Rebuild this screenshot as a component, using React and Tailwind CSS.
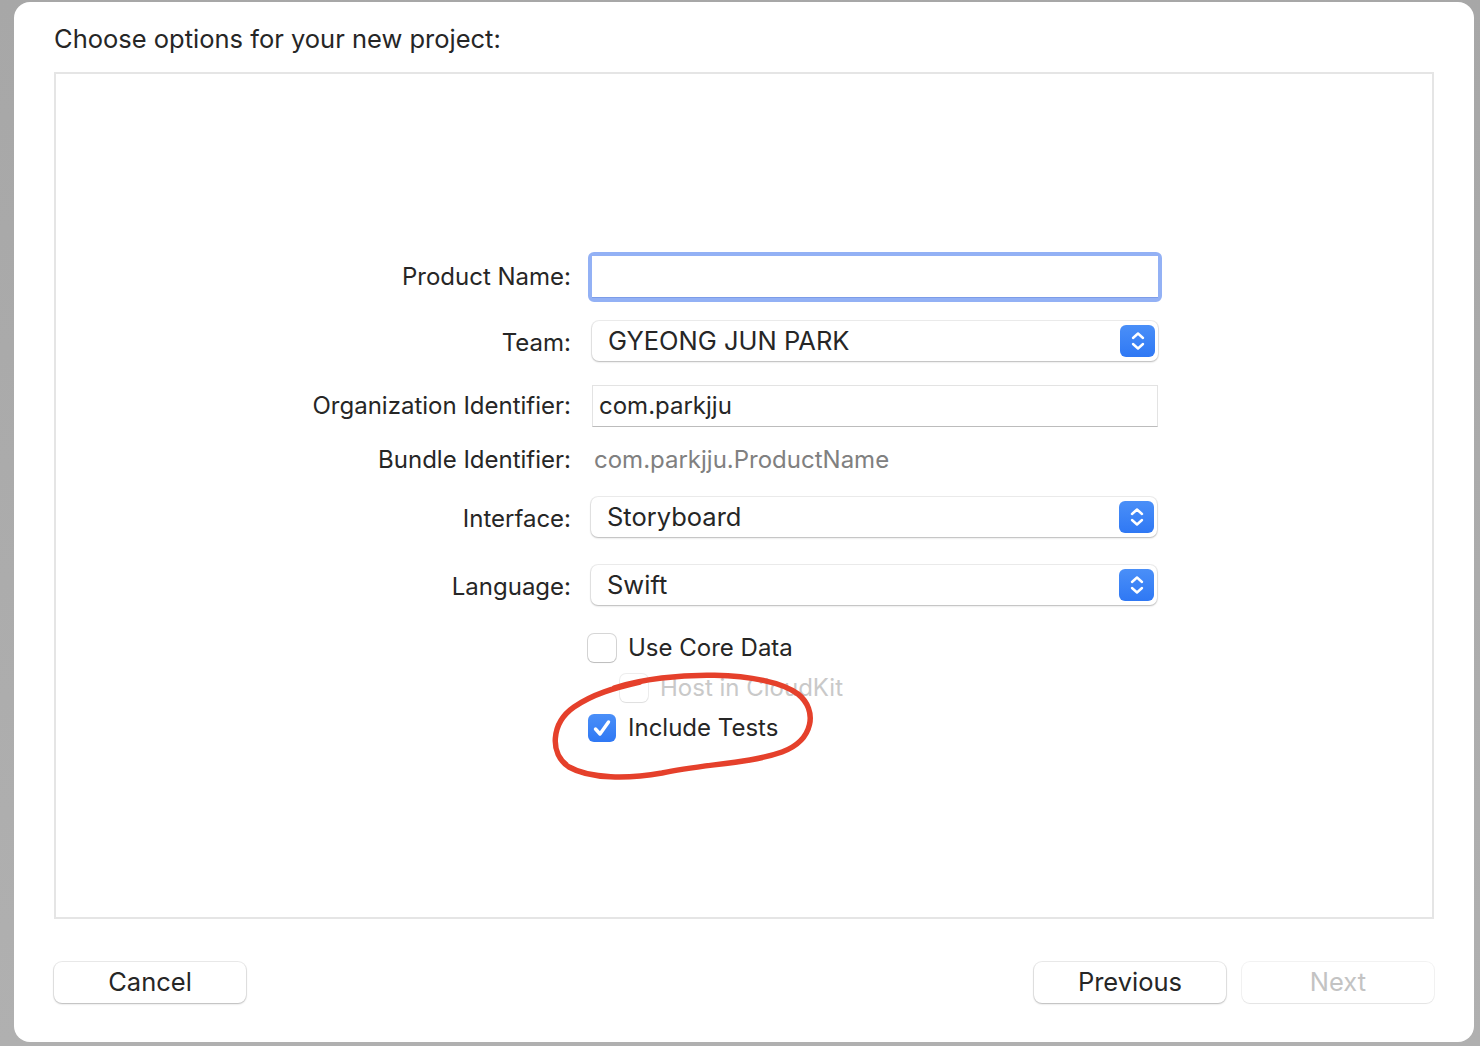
import React from "react";

const font = { fontFamily: "Inter, 'Liberation Sans', sans-serif" };

function Stepper() {
  return (
    <div className="w-[35px] h-[32px] rounded-[6px] bg-gradient-to-b from-[#4a8ff8] to-[#2f78f4] flex items-center justify-center">
      <svg width="16" height="22" viewBox="0 0 16 22" fill="none">
        <path d="M3 8 L8 3.5 L13 8" stroke="white" strokeWidth="2.4" strokeLinecap="round" strokeLinejoin="round" />
        <path d="M3 14 L8 18.5 L13 14" stroke="white" strokeWidth="2.4" strokeLinecap="round" strokeLinejoin="round" />
      </svg>
    </div>
  );
}

function Popup({ text }) {
  return (
    <div className="w-[566px] h-[40px] bg-white rounded-[7px] shadow-[0_0_0_1px_rgba(0,0,0,0.07),0_1px_2px_rgba(0,0,0,0.22)] flex items-center justify-between pl-[16px] pr-[3px]">
      <span className="text-[25.5px] text-[#262626]">{text}</span>
      <Stepper />
    </div>
  );
}

function Label({ children }) {
  return (
    <div className="w-[515px] text-right text-[24px] text-[#262626] shrink-0">{children}</div>
  );
}

function Checkbox({ checked, disabled }) {
  if (checked) {
    return (
      <div className="w-[28px] h-[28px] rounded-[6px] bg-gradient-to-b from-[#4a8ff8] to-[#2f78f4] flex items-center justify-center">
        <svg width="24" height="24" viewBox="0 0 24 24" fill="none">
          <path d="M5.5 13 L10 18 L18.5 6" stroke="white" strokeWidth="3.4" strokeLinecap="round" strokeLinejoin="round" />
        </svg>
      </div>
    );
  }
  return (
    <div
      className={`w-[28px] h-[28px] rounded-[6px] bg-white ${
        disabled
          ? "shadow-[0_0_0_1px_rgba(0,0,0,0.07),0_1px_1px_rgba(0,0,0,0.06)]"
          : "shadow-[0_0_0_1px_rgba(0,0,0,0.16),0_1px_1px_rgba(0,0,0,0.12)]"
      }`}
    />
  );
}

export default function App() {
  return (
    <div className="w-[1480px] h-[1046px] bg-gradient-to-b from-[#a7a7a7] to-[#b0b0b0] pt-[2px] pl-[14px] relative overflow-hidden" style={font}>
      <div className="w-[1460px] h-[1040px] bg-white rounded-[16px] flex flex-col">
        {/* Title */}
        <div className="h-[70px] pl-[40px] pt-[22px] text-[25.5px] leading-[30px] text-[#262626]">
          Choose options for your new project:
        </div>

        {/* Content box */}
        <div className="ml-[40px] w-[1380px] h-[847px] border-2 border-[#e5e5e5] bg-white pt-[178px]">
          {/* Product Name */}
          <div className="flex items-center h-[50px]">
            <Label>Product Name:</Label>
            <div className="ml-[17px] w-[574px] h-[50px] rounded-[6px] border-[4px] border-[#93b1f5]">
              <div className="w-full h-full bg-white border-b border-[#7c9ce8]" />
            </div>
          </div>

          {/* Team */}
          <div className="flex items-center h-[40px] mt-[19px]">
            <Label>
              <span className="relative top-[2px]">Team:</span>
            </Label>
            <div className="ml-[21px]">
              <Popup text="GYEONG JUN PARK" />
            </div>
          </div>

          {/* Organization Identifier */}
          <div className="flex items-center h-[42px] mt-[24px]">
            <Label>Organization Identifier:</Label>
            <div className="ml-[21px] w-[566px] h-[42px] bg-white border border-[#e3e3e3] border-b-[#bcbcbc] flex items-center pl-[6px]">
              <span className="text-[24px] text-[#262626]">com.parkjju</span>
            </div>
          </div>

          {/* Bundle Identifier */}
          <div className="flex items-center h-[40px] mt-[13px]">
            <Label>Bundle Identifier:</Label>
            <div className="ml-[23px] text-[24px] text-[#808080]">com.parkjju.ProductName</div>
          </div>

          {/* Interface */}
          <div className="flex items-center h-[40px] mt-[17px]">
            <Label>
              <span className="relative top-[2px]">Interface:</span>
            </Label>
            <div className="ml-[20px]">
              <Popup text="Storyboard" />
            </div>
          </div>

          {/* Language */}
          <div className="flex items-center h-[40px] mt-[28px]">
            <Label>
              <span className="relative top-[2px]">Language:</span>
            </Label>
            <div className="ml-[20px]">
              <Popup text="Swift" />
            </div>
          </div>

          {/* Checkboxes */}
          <div className="mt-[23px] pl-[532px] flex flex-col">
            <div className="flex items-center h-[40px] gap-[12px]">
              <Checkbox />
              <span className="text-[24px] text-[#262626]">Use Core Data</span>
            </div>
            <div className="flex items-center h-[40px] gap-[12px] pl-[32px]">
              <Checkbox disabled />
              <span className="text-[24px] text-[#c9c9c9]">Host in CloudKit</span>
            </div>
            <div className="flex items-center h-[40px] gap-[12px]">
              <Checkbox checked />
              <span className="text-[24px] text-[#262626]">Include Tests</span>
            </div>
          </div>
        </div>

        {/* Buttons */}
        <div className="flex items-center justify-between pl-[40px] pr-[40px] mt-[43px]">
          <button className="w-[192px] h-[41px] rounded-[8px] bg-white shadow-[0_0_0_1px_rgba(0,0,0,0.08),0_1px_2px_rgba(0,0,0,0.22)] text-[25.5px] text-[#262626]">
            Cancel
          </button>
          <div className="flex gap-[16px]">
            <button className="w-[192px] h-[41px] rounded-[8px] bg-white shadow-[0_0_0_1px_rgba(0,0,0,0.08),0_1px_2px_rgba(0,0,0,0.22)] text-[25.5px] text-[#262626]">
              Previous
            </button>
            <button className="w-[192px] h-[41px] rounded-[8px] bg-white shadow-[0_0_0_1px_rgba(0,0,0,0.05),0_1px_1px_rgba(0,0,0,0.06)] text-[25.5px] text-[#c3c3c3]">
              Next
            </button>
          </div>
        </div>
      </div>

      {/* Red hand-drawn annotation */}
      <svg className="absolute left-0 top-0 pointer-events-none" width="1480" height="1046" viewBox="0 0 1480 1046" fill="none">
        <path
          d="M614 688 C 670 670, 765 670, 798 694 C 818 710, 814 740, 782 752 C 748 764, 702 764, 662 773 C 628 779, 590 779, 569 767 C 549 754, 551 723, 574 707 C 593 694, 614 688, 640 682"
          stroke="#e5402b"
          strokeWidth="5.5"
          strokeLinecap="round"
          strokeLinejoin="round"
        />
      </svg>
    </div>
  );
}
